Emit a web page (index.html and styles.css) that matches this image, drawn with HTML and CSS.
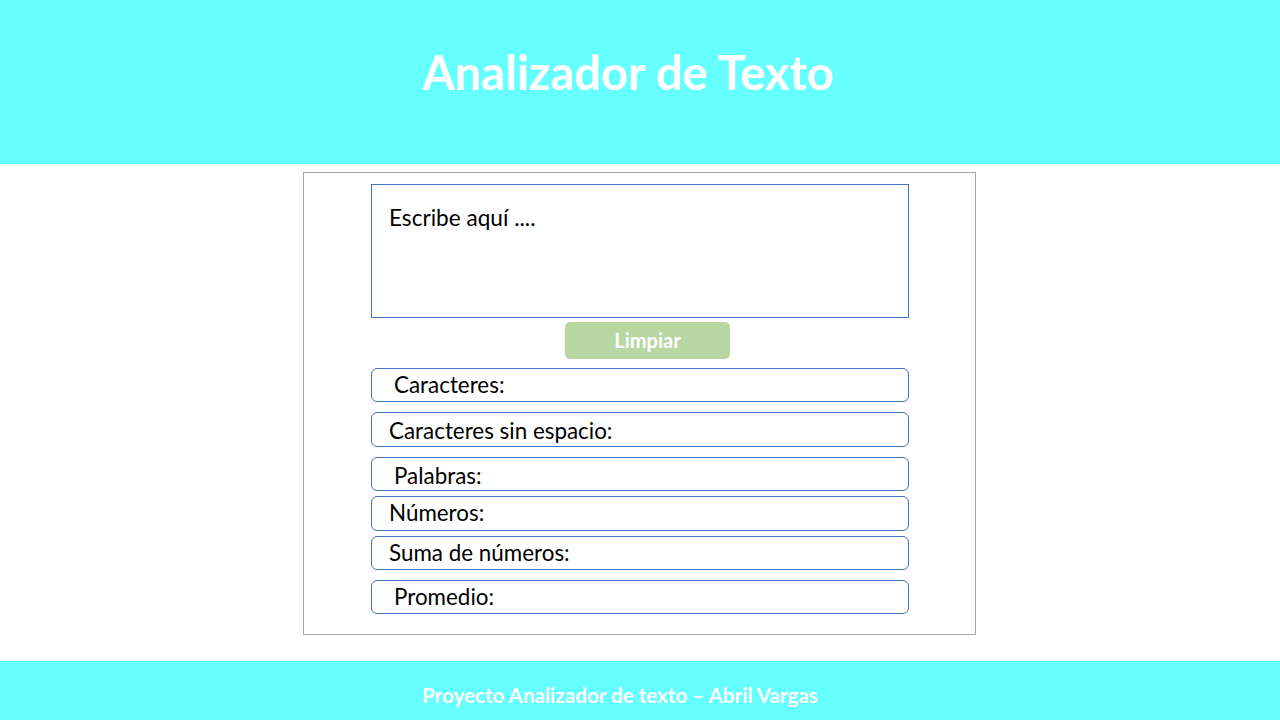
FILE: index.html
```html
<!DOCTYPE html>
<html lang="es">
<head>
<meta charset="utf-8">
<title>Analizador de Texto</title>
<link rel="stylesheet" href="styles.css">
</head>
<body>
<header class="top">
  <h1 class="title">Analizador de Texto</h1>
</header>
<main class="main">
  <section class="panel">
    <div class="input-box">Escribe aquí ....</div>
    <div class="btn-row"><button class="btn">Limpiar</button></div>
    <ul class="stats">
      <li class="stat stat--indent">Caracteres:</li>
      <li class="stat stat--gap stat--tall stat--low">Caracteres sin espacio:</li>
      <li class="stat stat--gap stat--indent stat--low">Palabras:</li>
      <li class="stat stat--tight stat--tall">Números:</li>
      <li class="stat stat--tight">Suma de números:</li>
      <li class="stat stat--gap stat--indent">Promedio:</li>
    </ul>
  </section>
</main>
<footer class="bottom">
  <p class="credit">Proyecto Analizador de texto – Abril Vargas</p>
</footer>
</body>
</html>
```

FILE: styles.css
```css
* { box-sizing: border-box; }
html, body { margin: 0; padding: 0; }
body {
  width: 1280px;
  height: 720px;
  display: flex;
  flex-direction: column;
  background: #ffffff;
  font-family: "Lato", "Open Sans", sans-serif;
  overflow: hidden;
}
.top {
  height: 164px;
  background: #66ffff;
  padding: 44px 0 0 422px;
}
.title {
  margin: 0;
  color: #ffffff;
  font-family: "Lato", sans-serif;
  font-weight: 700;
  font-size: 47px;
  line-height: 56px;
}
.main {
  flex: 1;
  padding: 8px 0 0 303px;
  display: flex;
  align-items: flex-start;
}
.panel {
  width: 673px;
  height: 463px;
  border: 1px solid #a6a6a6;
  padding: 11px 0 0 67px;
}
.input-box {
  width: 538px;
  height: 134px;
  border: 1px solid #4472c4;
  padding: 18px 17px;
  font-size: 22.6px;
  line-height: 30px;
  color: #000;
}
.btn-row {
  padding: 4px 0 0 194px;
}
.btn {
  width: 165px;
  height: 37px;
  border: none;
  border-radius: 5px;
  background: #b8d7a3;
  color: #ffffff;
  font-family: "Lato", sans-serif;
  font-weight: 700;
  font-size: 20px;
  padding: 0 0 2px;
}
.stats {
  list-style: none;
  margin: 9px 0 0;
  padding: 0;
}
.stat {
  width: 538px;
  height: 34px;
  border: 1px solid #4472c4;
  border-radius: 6px;
  padding: 0 0 0 17px;
  font-size: 22.4px;
  line-height: 32px;
  color: #000;
}
.stat--tall { height: 35px; }
.stat--indent { padding-left: 22px; }
.stat--low { padding-top: 2px; }
.stat--gap { margin-top: 10px; }
.stat--tight { margin-top: 5px; }
.bottom {
  height: 59px;
  background: #66ffff;
  padding: 21px 0 0 422px;
}
.credit {
  margin: 0;
  color: #ffffff;
  font-weight: 700;
  font-size: 20.6px;
  line-height: 26px;
}
```
